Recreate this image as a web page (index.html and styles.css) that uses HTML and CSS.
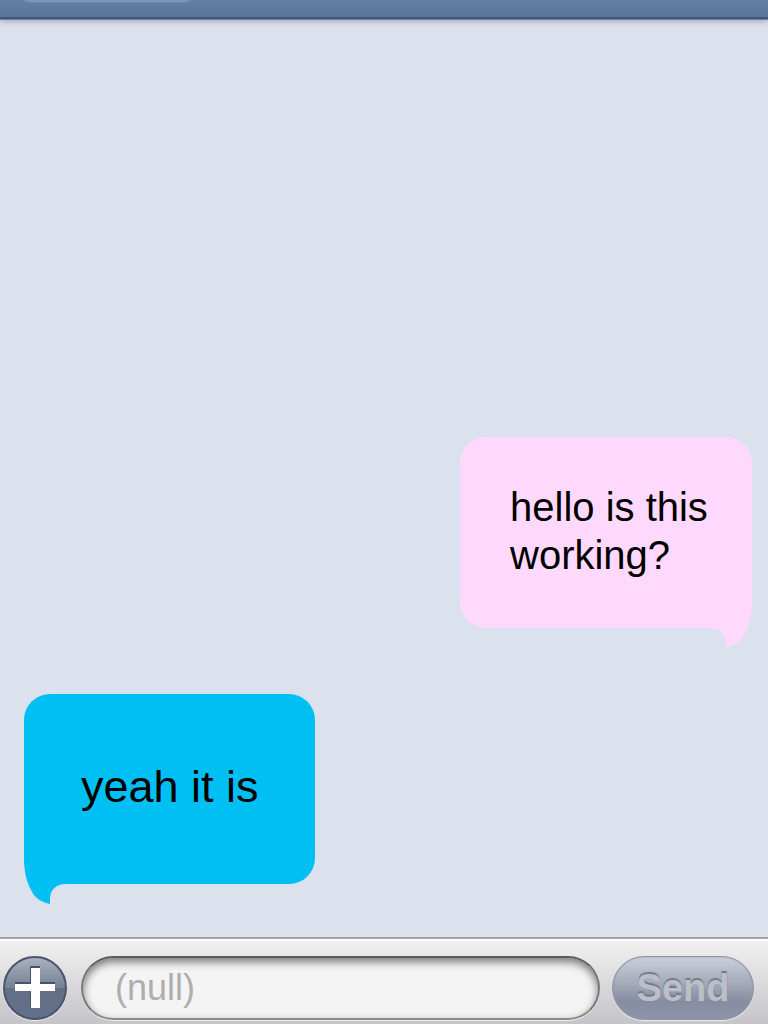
FILE: index.html
```html
<!DOCTYPE html>
<html lang="en">
<head>
<meta charset="utf-8">
<meta name="viewport" content="width=device-width, initial-scale=1">
<title>Messages</title>
<link rel="stylesheet" href="styles.css">
</head>
<body>
<div class="app">
  <header class="topbar"><div class="topbar-tab"></div></header>
  <main class="messages">
    <div class="bubble sent">
      <p class="bubble-text">hello is this working?</p>
      <svg class="tail" viewBox="0 0 44 48" aria-hidden="true"><path d="M44 0C44 14 42 24 37 34C33 42 26 46 18 48V43C18 34 11 28 1 28H0V0Z"/></svg>
    </div>
    <div class="bubble received">
      <p class="bubble-text">yeah it is</p>
      <svg class="tail" viewBox="0 0 44 48" aria-hidden="true"><path d="M0 0C0 14 2 25 7 34C11 43 18 46 26 48V43C26 34 32 28 42 28H44V0Z"/></svg>
    </div>
  </main>
  <form class="composer">
    <button class="add" type="button" aria-label="Add attachment">
      <svg class="plus" viewBox="0 0 40 40" aria-hidden="true">
        <path class="plus-shade" d="M15 -2H25V14H40V23H25V39H15V23H0V14H15Z"/>
        <path class="plus-face" d="M16 0H25V16H40V23H25V40H16V23H0V16H16Z"/>
      </svg>
    </button>
    <input class="field" type="text" placeholder="(null)" aria-label="Message">
    <button class="send" type="button">Send</button>
  </form>
</div>
</body>
</html>
```
FILE: styles.css
```css
* { box-sizing: border-box; }

body {
  margin: 0;
  font-family: "Liberation Sans", Arial, sans-serif;
}

.app {
  display: flex;
  flex-direction: column;
  min-height: 100vh;
  overflow: hidden;
  background: #dbe1ed;
}

.topbar {
  height: 20px;
  padding: 0 24px;
  background: linear-gradient(#637fa4, #587398);
  border-bottom: 1px solid #747f9d;
  box-shadow: inset 0 -2px #3c587e, 0 1px 6px #9c9ba9;
}

.topbar-tab {
  width: 166px;
  height: 2px;
  background: #8296b3;
  border-radius: 0 0 12px 12px / 0 0 2px 2px;
  box-shadow: 0 1px #6d87aa;
}

.messages {
  flex: 1;
  display: flex;
  flex-direction: column;
  justify-content: flex-end;
  gap: 66px;
  padding: 32px 16px 53px 24px;
}

.bubble {
  position: relative;
  display: flex;
  align-items: center;
  min-height: 190px;
  border-radius: 26px;
  color: #000;
}

.bubble-text { margin: 0; }

.sent {
  align-self: flex-end;
  width: 292px;
  min-height: 191px;
  padding: 0 32px 4px 50px;
  background: #ffd9fd;
  font-size: 40px;
  line-height: 48px;
}

.received {
  align-self: flex-start;
  width: 291px;
  padding: 0 32px 4px 57px;
  background: #00c0f3;
  font-size: 45px;
  line-height: 52px;
}

.tail {
  position: absolute;
  bottom: -20px;
  width: 44px;
  height: 48px;
}

.sent .tail { right: 0; fill: #ffd9fd; }
.received .tail { left: 0; fill: #00c0f3; }

.composer {
  display: flex;
  align-items: flex-start;
  min-height: 87px;
  padding: 17px 14px 4px 3px;
  border-top: 2px solid #a3a4a8;
  background: linear-gradient(#f2f2f2, #c4c4c9);
  box-shadow: inset 0 2px #fff;
}

.add {
  display: grid;
  place-items: center;
  flex: none;
  width: 64px;
  height: 64px;
  margin: 0 14px 0 0;
  padding: 0;
  border: 2px solid #4b556a;
  border-radius: 50%;
  background: linear-gradient(#a9b1bf, #748095 50%, #626f85 50%, #63708a);
  box-shadow: 0 1px 1px #f4f4f6;
}

.plus { width: 40px; height: 40px; overflow: visible; }
.plus-shade { fill: #4a5365; }
.plus-face { fill: #fff; }

.field {
  flex: 1;
  min-width: 0;
  height: 64px;
  margin: 0;
  padding: 0 32px;
  border: 2px solid #777674;
  border-top-color: #5c5b5a;
  border-bottom-color: #8b8a89;
  border-radius: 32px;
  background: #f4f4f4;
  box-shadow: inset 0 4px 9px #777, 0 1px #eeeef0;
  color: #333;
  font-family: inherit;
  font-size: 36px;
  outline: none;
}

.field::placeholder { color: #aeaeae; opacity: 1; }

.send {
  flex: none;
  width: 142px;
  height: 64px;
  margin: 0 0 0 12px;
  padding: 0;
  border: 1px solid #8e94a3;
  border-radius: 32px;
  background: linear-gradient(#cbd0db, #a4abb9 42%, #878da1 72%, #8c95a7);
  box-shadow: inset 0 0 2px #8e94a3, 0 1px 1px #eeeef0;
  color: #bcbfc7;
  font-family: inherit;
  font-size: 38px;
  font-weight: 700;
  text-shadow: 0 -2px 1px #72798a;
}
```
